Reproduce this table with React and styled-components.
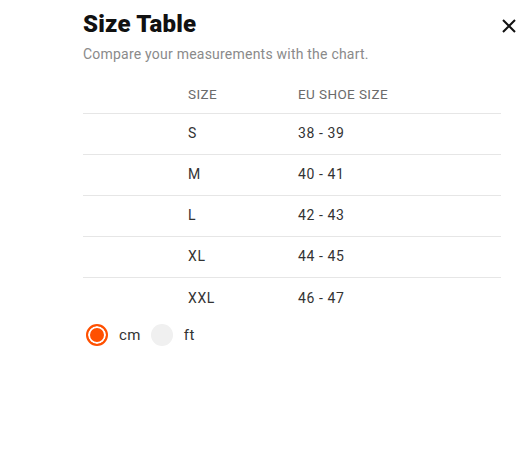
import React, { useState } from "react";
import styled, { createGlobalStyle } from "styled-components";

const Global = createGlobalStyle`
  html, body { margin: 0; padding: 0; background: #fff; }
  body { font-family: Roboto, "Liberation Sans", sans-serif; }
`;

const Panel = styled.div`
  width: 531px;
  height: 461px;
  box-sizing: border-box;
  padding: 8px 30px 0 83px;
`;

const Header = styled.div`
  display: flex;
  justify-content: space-between;
  align-items: flex-start;
  margin-right: -16px;
`;

const Title = styled.h1`
  margin: 0;
  font-size: 24px;
  line-height: 32px;
  font-weight: 900;
  color: #111;
  letter-spacing: 0.2px;
`;

const Close = styled.button`
  border: 0;
  background: none;
  padding: 0;
  margin-top: 10px;
  width: 16px;
  height: 16px;
  cursor: pointer;
  display: flex;
  align-items: center;
  justify-content: center;
`;

const Subtitle = styled.p`
  margin: 4px 0 0;
  font-size: 14px;
  line-height: 20px;
  color: #8a8a8a;
  letter-spacing: 0.22px;
`;

const Table = styled.div`
  margin-top: 12px;
  display: grid;
  grid-template-columns: 105px 110px 1fr;
`;

const Row = styled.div`
  display: contents;
`;

const Cell = styled.div`
  height: ${(p) => (p.$head ? "38px" : "41px")};
  display: flex;
  align-items: center;
  box-sizing: border-box;
  font-size: ${(p) => (p.$head ? "13.5px" : "14px")};
  letter-spacing: ${(p) => (p.$head ? "0.4px" : "0.6px")};
  color: ${(p) => (p.$head ? "#6b6b6b" : "#333")};
  text-transform: ${(p) => (p.$head ? "uppercase" : "none")};
  border-bottom: ${(p) => (p.$last ? "none" : "1px solid #e6e6e6")};
  padding-bottom: ${(p) => (p.$head ? "1px" : "2px")};
`;

const Units = styled.div`
  display: flex;
  align-items: center;
  margin-top: 5px;
  margin-left: 3px;
  height: 22px;
`;

const UnitLabel = styled.label`
  display: flex;
  align-items: center;
  gap: 11px;
  margin-right: 10px;
  font-size: 15px;
  letter-spacing: 0.4px;
  color: #333;
  cursor: pointer;
`;

const Dot = styled.span`
  width: 22px;
  height: 22px;
  box-sizing: border-box;
  border-radius: 50%;
  display: inline-block;
  background: ${(p) => (p.$on ? "#ff5000" : "#f0f0f0")};
  border: ${(p) => (p.$on ? "2px solid #ff5000" : "none")};
  box-shadow: ${(p) => (p.$on ? "inset 0 0 0 2px #fff" : "none")};
`;

const rows = [
  ["S", "38 - 39"],
  ["M", "40 - 41"],
  ["L", "42 - 43"],
  ["XL", "44 - 45"],
  ["XXL", "46 - 47"],
];

export default function App() {
  const [unit, setUnit] = useState("cm");
  return (
    <>
      <Global />
      <Panel>
        <Header>
          <Title>Size Table</Title>
          <Close aria-label="Close">
            <svg width="14" height="14" viewBox="0 0 14 14">
              <path d="M1 1L13 13M13 1L1 13" stroke="#111" strokeWidth="2" />
            </svg>
          </Close>
        </Header>
        <Subtitle>Compare your measurements with the chart.</Subtitle>
        <Table>
          <Row>
            <Cell $head />
            <Cell $head>Size</Cell>
            <Cell $head>EU Shoe Size</Cell>
          </Row>
          {rows.map(([s, eu], i) => (
            <Row key={s}>
              <Cell $last={i === rows.length - 1} />
              <Cell $last={i === rows.length - 1}>{s}</Cell>
              <Cell $last={i === rows.length - 1}>{eu}</Cell>
            </Row>
          ))}
        </Table>
        <Units>
          {["cm", "ft"].map((u) => (
            <UnitLabel key={u} onClick={() => setUnit(u)}>
              <Dot $on={unit === u} />
              {u}
            </UnitLabel>
          ))}
        </Units>
      </Panel>
    </>
  );
}
